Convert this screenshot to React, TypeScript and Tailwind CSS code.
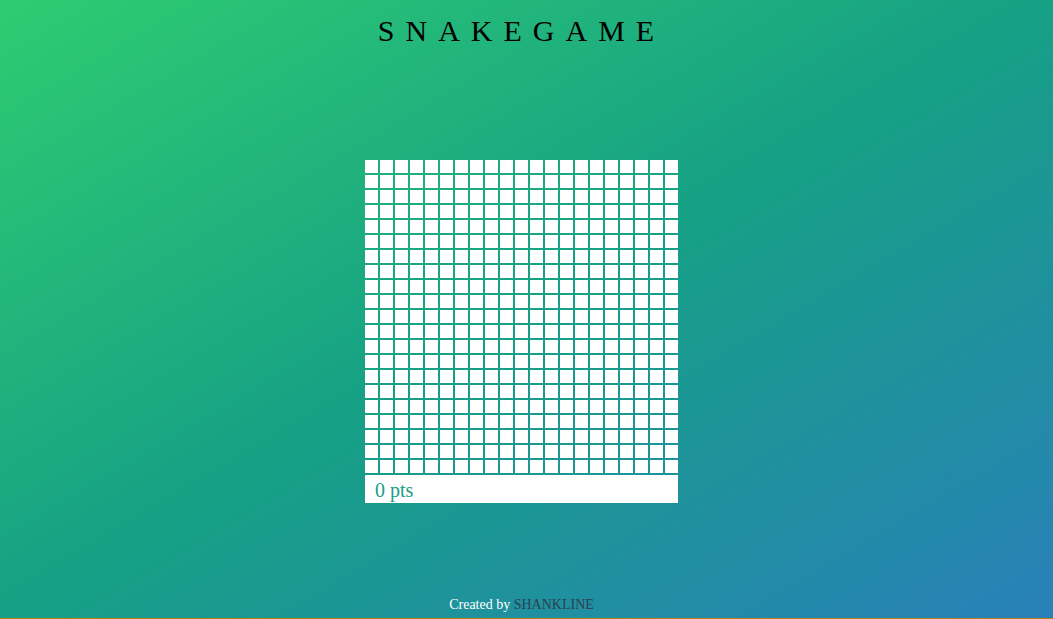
import React from "react";

const SIZE = 21;

export default function App() {
  const cells = Array.from({ length: SIZE * SIZE });
  return (
    <div className=" h-[619px] w-full flex flex-col bg-[linear-gradient(to_bottom_right,#2ecc71,#16a085,#2980b9)] font-['Liberation_Serif',serif] overflow-hidden">
      <div className=" flex-1 flex flex-col items-center pr-[10px]">
        <h1 className=" pt-[14px] text-[30px] leading-[33px] tracking-[11px] text-black">
          SNAKEGAME
        </h1>
        <div className=" mt-[113px] flex flex-col gap-[2px]">
          <div className=" grid grid-cols-[repeat(21,13px)] gap-[2px]">
            {cells.map((_, i) => (
              <div key={i} className=" h-[13px] bg-white" />
            ))}
          </div>
          <div className=" h-[28px] bg-white flex items-center pt-[1px] px-[10px] text-[20px] text-[#16a085]">
            0 pts
          </div>
        </div>
        <div className=" flex-1" />
        <p className=" mb-[5px] text-[14px] leading-[16px] text-white">
          Created by <span className=" text-[#2c3e50]">SHANKLINE</span>
        </p>
      </div>
      <div className=" h-[1px] bg-[#c0801d]" />
    </div>
  );
}
